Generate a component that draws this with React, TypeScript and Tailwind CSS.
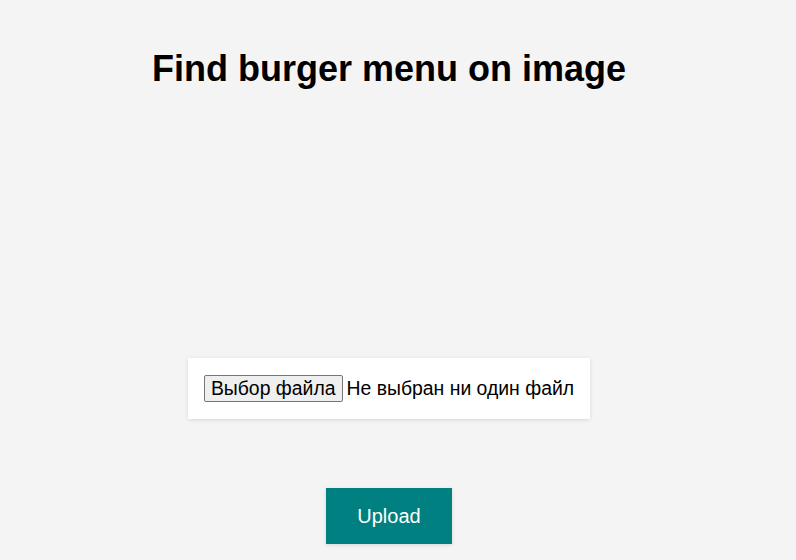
export default function App() {
  return (
    <div className="min-h-[560px] w-full bg-[#f4f4f4]" style={{ fontFamily: '"Liberation Sans", Arial, sans-serif' }}>
      <div className="flex w-[778px] flex-col items-center">
        <h1 className="mt-[48px] text-[36px] font-bold leading-[42px] text-black">Find burger menu on image</h1>
        <div className="mt-[268px] bg-white p-4 shadow-[0_1px_4px_rgba(0,0,0,0.12)]">
          <div className="flex h-[29px] items-center text-[19.4px] leading-[23px] text-black">
            <span className="rounded-[2px] border border-[#767676] bg-[#efefef] px-[6px] py-[1px]">Выбор файла</span>
            <span className="ml-[4px]">Не выбран ни один файл</span>
          </div>
        </div>
        <button className="mt-[69px] h-[56px] w-[126px] bg-[#008080] text-[20px] text-white shadow-[0_1px_4px_rgba(0,0,0,0.12)]">
          Upload
        </button>
      </div>
    </div>
  );
}
